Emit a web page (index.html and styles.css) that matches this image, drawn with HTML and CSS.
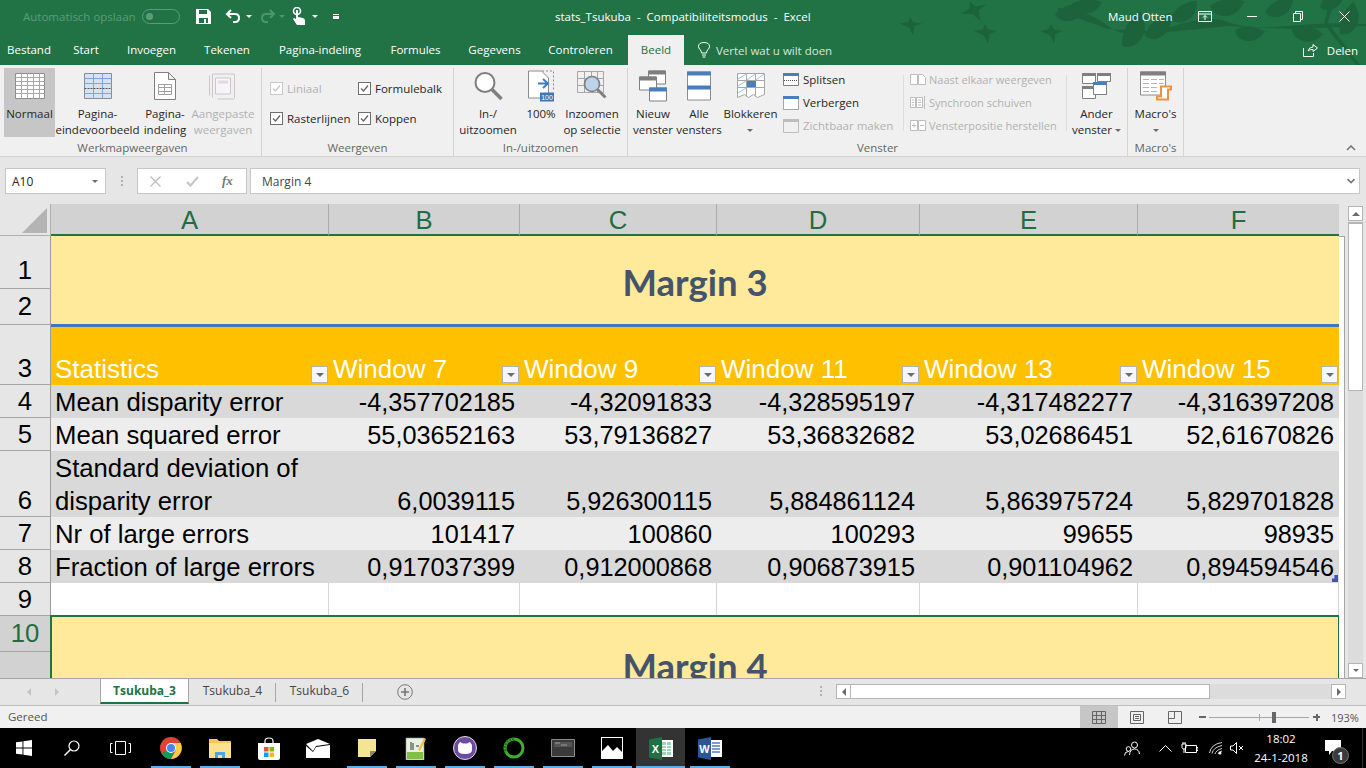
FILE: index.html
```html
<!DOCTYPE html>
<html>
<head>
    <meta charset="UTF-8">
    <title>stats_Tsukuba - Excel</title>
    <link rel="stylesheet" href="styles.css">
</head>
<body>
<div class="window">

    <div class="chrome">
        <svg class="leaves" width="466" height="65" viewBox="0 0 466 65" fill="#1c633c">
            <defs>
                <path id="bird" d="M0 5l6-1 2-4 2 4 7 1-6 2-1 7-3-6z"/>
                <path id="leaf" d="M0 0q8-9 22-7-3 11-12 12-7 1-10-5z"/>
            </defs>
            <use href="#bird" transform="translate(0 17) scale(1.300)"/>
            <use href="#bird" transform="translate(58 6) rotate(-20) scale(1.600)"/>
            <use href="#bird" transform="translate(74 24) scale(1.400)"/>
            <use href="#bird" transform="translate(140 24) scale(1.400)"/>
            <path d="M158 8q30 2 50 18t60 2 60-6 60 4 78-2v2l-78 3-60-3-60 6-60-3-50-18z"/>
            <use href="#leaf" transform="translate(155 14) scale(1.400)"/>
            <use href="#leaf" transform="translate(172 4) rotate(15) scale(1.300)"/>
            <use href="#leaf" transform="translate(222 46) rotate(-45) scale(1.700)"/>
            <use href="#leaf" transform="translate(245 36) rotate(-25) scale(1.500)"/>
            <use href="#leaf" transform="translate(270 18) rotate(-15) scale(1.400)"/>
            <use href="#leaf" transform="translate(310 6) rotate(10) scale(1.500)"/>
            <use href="#leaf" transform="translate(335 30) rotate(20) scale(1.300)"/>
            <use href="#leaf" transform="translate(365 12) rotate(-10) scale(1.400)"/>
            <use href="#leaf" transform="translate(392 27) rotate(30) scale(1.400)"/>
            <use href="#leaf" transform="translate(420 8) rotate(-30) scale(1.500)"/>
            <use href="#leaf" transform="translate(440 34) rotate(-50) scale(1.500)"/>
            <path d="M430 0l-6 24 32 41h4l-32-42 6-23z"/>
        </svg>

        <!-- title bar -->
        <div class="titlebar">
            <span class="autosave">Automatisch opslaan</span>
            <span class="toggle"><i></i></span>
            <svg class="qa-save" width="15" height="15" viewBox="0 0 15 15"><path d="M0 0h12l3 3v12H0z" fill="#fff"/><path d="M3 1h8v4H3zM3 9h9v5H3z" fill="#217346"/><path d="M8 10h2v4H8z" fill="#fff"/></svg>
            <svg class="qa-undo" width="16" height="14" viewBox="0 0 16 14" fill="none" stroke="#fff" stroke-width="2"><path d="M6 1L2 5l4 4M2 5h8q4 0 4 4t-4 4H8"/></svg>
            <i class="caret qa-caret1"></i>
            <svg class="qa-redo" width="16" height="14" viewBox="0 0 16 14" fill="none" stroke="#4f9370" stroke-width="2"><path d="M10 1l4 4-4 4M14 5H6q-4 0-4 4t4 4h2"/></svg>
            <i class="caret caret-dim qa-caret2"></i>
            <svg class="qa-touch" width="14" height="18" viewBox="0 0 14 18"><circle cx="5" cy="4" r="3.500" fill="none" stroke="#fff" stroke-width="1.600"/><path d="M4 3h2v7l5 1q2 .5 2 3v4H5L1 12l1-1 2 1z" fill="#fff"/></svg>
            <i class="caret qa-caret3"></i>
            <span class="qa-more"></span>
            <span class="doc-title">stats_Tsukuba &nbsp;-&nbsp; Compatibiliteitsmodus &nbsp;-&nbsp; Excel</span>
            <span class="user">Maud Otten</span>
            <svg class="btn-display" width="14" height="11" viewBox="0 0 14 11" fill="none" stroke="#fff"><path d="M.5.5h13v10H.5zM.5 3h13M7 9V4.500M5 6.500l2-2 2 2"/></svg>
            <svg class="btn-min" width="11" height="11" viewBox="0 0 11 11" stroke="#fff"><path d="M0 5.500h10"/></svg>
            <svg class="btn-max" width="10" height="11" viewBox="0 0 10 11" fill="none" stroke="#fff"><path d="M.5 2.500h7v8h-7zM2.500 2.500V.5h7v8H7.500"/></svg>
            <svg class="btn-close" width="11" height="11" viewBox="0 0 11 11" stroke="#fff"><path d="M.5.5l10 10M10.500.5l-10 10"/></svg>
        </div>

        <!-- tabs -->
        <div class="tabbar">
            <div class="tabs">
                <span class="tab">Bestand</span>
                <span class="tab">Start</span>
                <span class="tab">Invoegen</span>
                <span class="tab">Tekenen</span>
                <span class="tab">Pagina-indeling</span>
                <span class="tab">Formules</span>
                <span class="tab">Gegevens</span>
                <span class="tab">Controleren</span>
                <span class="tab tab-active">Beeld</span>
            </div>
            <div class="tellme">
                <svg width="12" height="16" viewBox="0 0 12 16" fill="none" stroke="#fff"><path d="M3.500 11q0-2-1.500-3.500Q.5 6 .5 4.500q0-4 5.500-4t5.500 4q0 1.500-1.500 3Q8.500 9 8.500 11zM4 13h4M4.500 15h3"/></svg>
                <span>Vertel wat u wilt doen</span>
            </div>
            <div class="share">
                <svg width="15" height="14" viewBox="0 0 15 14" fill="none" stroke="#fff"><path d="M.5 5v8.500h10V10M5 8q1-4 5-4V1.500L14.500 5 10 8.500V6.500Q7 6 5 8z"/></svg>
                <span>Delen</span>
            </div>
        </div>
    </div>

    <!-- ribbon -->
    <div class="ribbon">
        <div class="group group-views">
            <div class="group-body">
                <div class="rb rb-normal">
                    <svg width="30" height="26" viewBox="0 0 30 26" fill="#fff" stroke="#8c8c8c"><path d="M.5.5h29v25H.5z"/><path fill="none" stroke="#a6a6a6" d="M.5 4.500h29M.5 8.500h29M.5 12.500h29M.5 16.500h29M.5 20.500h29M6.500.5v25M12.500.5v25M18.500.5v25M24.500.5v25"/></svg>
                    <span class="rb-label">Normaal</span>
                </div>
                <div class="rb rb-break">
                    <svg width="28" height="26" viewBox="0 0 28 26" fill="#d3e3f4" stroke="#8c8c8c"><path d="M.5.5h27v25H.5z"/><path fill="none" stroke="#7aa7d6" d="M9.500.5v25M18.500.5v25M.5 5.500h27M.5 10.500h27M.5 20.500h27"/><path fill="none" stroke="#555" stroke-dasharray="2 1" d="M.5 15.500h27"/></svg>
                    <span class="rb-label">Pagina-<br>eindevoorbeeld</span>
                </div>
                <div class="rb rb-layout">
                    <svg width="22" height="28" viewBox="0 0 22 28" fill="#fff" stroke="#7f7f7f"><path d="M.5.5h14l7 7v20H.5zM14.500.5v7h7"/><path fill="none" stroke="#a0a0a0" d="M4.500 12.500h13v10h-13zM4.500 15.500h13M4.500 19.500h13M10.500 12.500v10"/></svg>
                    <span class="rb-label">Pagina-<br>indeling</span>
                </div>
                <div class="rb rb-custom rb-off">
                    <svg width="28" height="27" viewBox="0 0 28 27" fill="none" stroke="#c8c8c8"><path d="M6.500 5.500h15v16h-15z" fill="#f6f4f8"/><path d="M9 8h10v3H9z" fill="#dcdcdc" stroke="none"/><path d="M3.500 1.500h22v24M.5 3v20M3.500 1.500V25"/><path d="M8.500 26.500h17"/></svg>
                    <span class="rb-label">Aangepaste<br>weergaven</span>
                </div>
            </div>
            <div class="group-label">Werkmapweergaven</div>
        </div>

        <div class="group group-show">
            <div class="group-body checks">
                <label class="check check-off"><i class="box"><svg width="11" height="11" viewBox="0 0 11 11" fill="none" stroke="#c8c8c8" stroke-width="1.300"><path d="M2 5.500l2.500 2.500L9 2.500"/></svg></i>Liniaal</label>
                <label class="check"><i class="box"><svg width="11" height="11" viewBox="0 0 11 11" fill="none" stroke="#666" stroke-width="1.300"><path d="M2 5.500l2.500 2.500L9 2.500"/></svg></i>Formulebalk</label>
                <label class="check"><i class="box"><svg width="11" height="11" viewBox="0 0 11 11" fill="none" stroke="#666" stroke-width="1.300"><path d="M2 5.500l2.500 2.500L9 2.500"/></svg></i>Rasterlijnen</label>
                <label class="check"><i class="box"><svg width="11" height="11" viewBox="0 0 11 11" fill="none" stroke="#666" stroke-width="1.300"><path d="M2 5.500l2.500 2.500L9 2.500"/></svg></i>Koppen</label>
            </div>
            <div class="group-label">Weergeven</div>
        </div>

        <div class="group group-zoom">
            <div class="group-body">
                <div class="rb rb-zoom">
                    <svg width="29" height="29" viewBox="0 0 29 29" fill="none" stroke="#7f7f7f"><circle cx="11" cy="11" r="9.500" stroke-width="2" fill="#fff"/><path d="M18 18l9.500 9.500" stroke-width="3.500"/></svg>
                    <span class="rb-label">In-/<br>uitzoomen</span>
                </div>
                <div class="rb rb-100">
                    <svg width="26" height="31" viewBox="0 0 26 31"><path d="M.5.5h13l7 7v20H.5z" fill="#fff" stroke="#8c8c8c"/><path d="M14 .5h11.500v20" fill="none" stroke="#8c8c8c" stroke-dasharray="2 2"/><path d="M10 13h9M15 8.500l5 4.500-5 4.500" fill="none" stroke="#3f7fc0" stroke-width="2"/><path d="M12 22h14v9H12z" fill="#3f78b5"/><text x="19" y="29.500" class="mini-num">100</text></svg>
                    <span class="rb-label">100%</span>
                </div>
                <div class="rb rb-zoomsel">
                    <svg width="30" height="30" viewBox="0 0 30 30" fill="none" stroke="#a6a6a6"><path d="M.5.5h26v21H.5zM.5 7.500h26M.5 14.500h26M7.500.5v21M14.500.5v21M20.500.5v21"/><circle cx="15" cy="13" r="7.500" fill="#bcd3ea" stroke="#7f7f7f" stroke-width="1.600"/><path d="M20.500 18.500l8 8" stroke="#7f7f7f" stroke-width="3"/></svg>
                    <span class="rb-label">Inzoomen<br>op selectie</span>
                </div>
            </div>
            <div class="group-label">In-/uitzoomen</div>
        </div>

        <div class="group group-window">
            <div class="group-body">
                <div class="rb rb-new">
                    <svg width="28" height="31" viewBox="0 0 28 31" fill="#fff" stroke="#7f7f7f"><path d="M9.500.5h17v13h-17z"/><path d="M9.500.5h17v3h-17z" fill="#7f7f7f"/><path d="M.5 6.500h17v13H.5z"/><path d="M.5 6.500h17v3H.5z" fill="#7f7f7f"/><path d="M10.500 17.500h17v13h-17z"/><path d="M10 17h18v4H10z" fill="#4a7ebb" stroke="none"/></svg>
                    <span class="rb-label">Nieuw<br>venster</span>
                </div>
                <div class="rb rb-all">
                    <svg width="24" height="29" viewBox="0 0 24 29" fill="#fff" stroke="#8c8c8c"><path d="M.5.5h23v28H.5z"/><path d="M0 0h24v4H0zM0 14h24v4H0z" fill="#4a7ebb" stroke="none"/></svg>
                    <span class="rb-label">Alle<br>vensters</span>
                </div>
                <div class="rb rb-freeze">
                    <svg width="28" height="26" viewBox="0 0 28 26" fill="#fff" stroke="#a6a6a6"><path d="M.5.5h27v21l-7 3-4-3-5 3-4-3-7 3z"/><path d="M.5 7.500h27M.5 14.500h27M9.500.5v23M18.500.5v23" fill="none"/><path d="M10 8h9v6h-9z" fill="#4a7ebb" stroke="none"/><path d="M1 6l8-5M1 13l8-5M1 20l8-5M10 7l8-6M19 7l8-6" fill="none" stroke="#9dc0e4"/></svg>
                    <span class="rb-label">Blokkeren<br><i class="caret caret-gray"></i></span>
                </div>
                <div class="small-list list-split">
                    <div class="small-row">
                        <svg width="16" height="13" viewBox="0 0 16 13" fill="#fff" stroke="#7f7f7f"><path d="M.5.5h15v12H.5z"/><path d="M0 0h16v3H0z" fill="#4a7ebb" stroke="none"/><path d="M1 7.500h14" stroke="#555" stroke-dasharray="1 1"/></svg>
                        <span>Splitsen</span>
                    </div>
                    <div class="small-row">
                        <svg width="16" height="14" viewBox="0 0 16 14" fill="#fff" stroke="#555"><path d="M.5.500h15v13H.5z" stroke-dasharray="1 1"/><path d="M0 0h16v3H0z" fill="#4a7ebb" stroke="none"/></svg>
                        <span>Verbergen</span>
                    </div>
                    <div class="small-row row-off">
                        <svg width="16" height="14" viewBox="0 0 16 14" fill="none" stroke="#bdbdbd"><path d="M.5.500h15v13H.5z"/><path d="M0 0h16v3H0z" fill="#bdbdbd" stroke="none"/></svg>
                        <span>Zichtbaar maken</span>
                    </div>
                </div>
                <div class="small-list list-sync">
                    <div class="small-row row-off">
                        <svg width="16" height="11" viewBox="0 0 16 11" fill="#fff" stroke="#bdbdbd"><path d="M.5.500h7v10h-7zM8.500.500h4l3 3v7h-7z"/></svg>
                        <span>Naast elkaar weergeven</span>
                    </div>
                    <div class="small-row row-off">
                        <svg width="16" height="13" viewBox="0 0 16 13" fill="#fff" stroke="#bdbdbd"><path d="M.5 1.500h5v10h-5zM6.500 1.500h6v10h-6zM2 4h2M2 6.500h2M2 9h2M8 4h3M8 6.500h3M8 9h3M14.500 0v13"/></svg>
                        <span>Synchroon schuiven</span>
                    </div>
                    <div class="small-row row-off">
                        <svg width="16" height="11" viewBox="0 0 16 11" fill="#fff" stroke="#bdbdbd"><path d="M.5.500h7v10h-7zM8.500.500h7v10h-7zM2 5.500h4M4 3.500v4M10 5.500h4"/></svg>
                        <span>Vensterpositie herstellen</span>
                    </div>
                </div>
                <div class="rb rb-switch">
                    <svg width="30" height="26" viewBox="0 0 30 26" fill="#fff" stroke="#7f7f7f"><path d="M.5.5h13v10H.5zM15.500.5h13v8h-13zM.5 13.500h13v12H.5z"/><path d="M0 0h14v3H0zM15 0h14v3H15zM0 13h14v3H0z" fill="#7f7f7f" stroke="none"/><path d="M11.500 9.500h13v12h-13z"/><path d="M11 9h14v3H11z" fill="#4a7ebb" stroke="none"/></svg>
                    <span class="rb-label">Ander<br>venster <i class="caret caret-gray"></i></span>
                </div>
            </div>
            <div class="group-label">Venster</div>
        </div>

        <div class="group group-macro">
            <div class="group-body">
                <div class="rb rb-macro">
                    <svg width="32" height="29" viewBox="0 0 32 29" fill="#fff" stroke="#8c8c8c"><path d="M.5.5h25v23H.5z"/><path d="M0 0h26v4H0z" fill="#7f7f7f" stroke="none"/><path d="M3 8h6M11 8h6M19 8h5M3 12h6M11 12h6M19 12h5M3 16h6M11 16h6M3 20h6M11 20h6" fill="none" stroke="#b5b5b5"/><path d="M21 15h10v3h-3v10h-11v-3h4z" fill="#fff" stroke="#ed9144" stroke-width="2"/></svg>
                    <span class="rb-label">Macro's<br><i class="caret caret-gray"></i></span>
                </div>
            </div>
            <div class="group-label">Macro's</div>
        </div>

        <svg class="collapse" width="10" height="6" viewBox="0 0 10 6" fill="none" stroke="#777" stroke-width="1.600"><path d="M1 5l4-4 4 4"/></svg>
    </div>

    <!-- formula bar -->
    <div class="formulabar">
        <div class="namebox"><span>A10</span><i class="caret caret-gray"></i></div>
        <div class="fdots"></div>
        <div class="fbuttons">
            <svg width="11" height="11" viewBox="0 0 11 11" stroke="#bdbdbd" stroke-width="1.300"><path d="M.5.5l10 10M10.500.5l-10 10"/></svg>
            <svg width="13" height="11" viewBox="0 0 13 11" fill="none" stroke="#c4c4c4" stroke-width="2"><path d="M1 6l3.500 3.500L12 1"/></svg>
            <span class="fx">fx</span>
        </div>
        <div class="finput"><span>Margin 4</span><svg width="8" height="6" viewBox="0 0 8 6" fill="none" stroke="#777" stroke-width="1.600"><path d="M.5 1l3.500 3.500L7.500 1"/></svg></div>
    </div>

    <!-- sheet -->
    <div class="sheet-area">
        <div class="sheet">
            <div class="corner"><i></i></div>
            <div class="ch">A</div><div class="ch">B</div><div class="ch">C</div><div class="ch">D</div><div class="ch">E</div><div class="ch ch-last">F</div>

            <div class="rh rh-high">1</div>
            <div class="merged m3">Margin 3</div>
            <div class="rh rh-high">2</div>

            <div class="rh">3</div>
            <div class="cell head">Statistics<i class="filter"></i></div>
            <div class="cell head">Window 7<i class="filter"></i></div>
            <div class="cell head">Window 9<i class="filter"></i></div>
            <div class="cell head">Window 11<i class="filter"></i></div>
            <div class="cell head">Window 13<i class="filter"></i></div>
            <div class="cell head">Window 15<i class="filter"></i></div>

            <div class="rh">4</div>
            <div class="cell dark">Mean disparity error</div>
            <div class="cell dark num">-4,357702185</div>
            <div class="cell dark num">-4,32091833</div>
            <div class="cell dark num">-4,328595197</div>
            <div class="cell dark num">-4,317482277</div>
            <div class="cell dark num">-4,316397208</div>

            <div class="rh">5</div>
            <div class="cell light">Mean squared error</div>
            <div class="cell light num">55,03652163</div>
            <div class="cell light num">53,79136827</div>
            <div class="cell light num">53,36832682</div>
            <div class="cell light num">53,02686451</div>
            <div class="cell light num">52,61670826</div>

            <div class="rh">6</div>
            <div class="cell dark wrapped">Standard deviation of disparity error</div>
            <div class="cell dark num">6,0039115</div>
            <div class="cell dark num">5,926300115</div>
            <div class="cell dark num">5,884861124</div>
            <div class="cell dark num">5,863975724</div>
            <div class="cell dark num">5,829701828</div>

            <div class="rh">7</div>
            <div class="cell light">Nr of large errors</div>
            <div class="cell light num">101417</div>
            <div class="cell light num">100860</div>
            <div class="cell light num">100293</div>
            <div class="cell light num">99655</div>
            <div class="cell light num">98935</div>

            <div class="rh">8</div>
            <div class="cell dark">Fraction of large errors</div>
            <div class="cell dark num">0,917037399</div>
            <div class="cell dark num">0,912000868</div>
            <div class="cell dark num">0,906873915</div>
            <div class="cell dark num">0,901104962</div>
            <div class="cell dark num corner-mark">0,894594546</div>

            <div class="rh">9</div>
            <div class="cell blank"></div><div class="cell blank"></div><div class="cell blank"></div><div class="cell blank"></div><div class="cell blank"></div><div class="cell blank"></div>

            <div class="rh rh-high rh-sel">10</div>
            <div class="merged m4">Margin 4</div>
            <div class="rh rh-sel"></div>
        </div>
        <div class="gutter"></div>
        <div class="vscroll">
            <div class="sb-btn"><i class="arrow-up"></i></div>
            <div class="sb-thumb"></div>
            <div class="sb-track"></div>
            <div class="sb-btn"><i class="caret caret-gray"></i></div>
        </div>
    </div>

    <!-- sheet tabs -->
    <div class="sheetbar">
        <i class="nav nav-left"></i>
        <i class="nav nav-right"></i>
        <div class="stab stab-active">Tsukuba_3</div>
        <div class="stab stab-sep">Tsukuba_4</div>
        <div class="stab stab-sep">Tsukuba_6</div>
        <svg class="addsheet" width="16" height="16" viewBox="0 0 16 16" fill="none" stroke="#777"><circle cx="8" cy="8" r="7.300"/><path d="M4 8h8M8 4v8" stroke-width="1.600"/></svg>
        <div class="hdots"></div>
        <div class="hscroll">
            <div class="hb"><i class="tri-left"></i></div>
            <div class="hthumb"></div>
            <div class="htrack"></div>
            <div class="hb"><i class="tri-right"></i></div>
        </div>
    </div>

    <!-- status bar -->
    <div class="statusbar">
        <span class="ready">Gereed</span>
        <div class="viewbtns">
            <div class="vb vb-on"><svg width="14" height="13" viewBox="0 0 14 13" fill="none" stroke="#666"><path d="M.5.5h13v12H.5zM.5 4.500h13M.5 8.500h13M4.500.5v12M9.500.5v12"/></svg></div>
            <div class="vb"><svg width="14" height="13" viewBox="0 0 14 13" fill="none" stroke="#666"><path d="M.5.5h13v12H.5zM3.500 3.500h7v6h-7zM5 5.500h4M5 7.500h4"/></svg></div>
            <div class="vb"><svg width="14" height="13" viewBox="0 0 14 13" fill="none" stroke="#666"><path d="M.5.5h13v12H.5zM.5 7.500h6V.5"/></svg></div>
        </div>
        <div class="zoomctl">
            <i class="z-minus"></i>
            <div class="z-track"><i class="z-mid"></i><i class="z-thumb"></i></div>
            <i class="z-plus"></i>
        </div>
        <span class="zoompct">193%</span>
    </div>

    <!-- taskbar -->
    <div class="taskbar">
        <div class="task task-plain">
            <svg width="16" height="16" viewBox="0 0 16 16" fill="#fff"><path d="M0 2.300l6.500-.9v6.200H0zM7.400 1.300L16 0v7.600H7.400zM0 8.400h6.500v6.200L0 13.700zM7.400 8.400H16V16l-8.600-1.300z"/></svg>
        </div>
        <div class="task task-plain">
            <svg width="16" height="16" viewBox="0 0 16 16" fill="none" stroke="#fff" stroke-width="1.200"><circle cx="10" cy="6" r="5"/><path d="M6.500 9.500L.5 15.500" stroke-width="1.500"/></svg>
        </div>
        <div class="task task-plain task-view">
            <svg width="21" height="14" viewBox="0 0 21 14" fill="none" stroke="#fff"><path d="M5.500.5h10v13h-10zM2.500 2.500H.5v9h2M18.500 2.500h2v9h-2"/></svg>
        </div>
        <div class="task run">
            <svg width="22" height="22" viewBox="0 0 22 22"><circle cx="11" cy="11" r="11" fill="#db4437"/><path d="M11 11L1.500 16.500A11 11 0 0 0 11 22l5-11z" fill="#0f9d58"/><path d="M11 6h9.500A11 11 0 0 1 11 22l5-9z" fill="#ffcd40"/><circle cx="11" cy="11" r="5" fill="#fff"/><circle cx="11" cy="11" r="4" fill="#4285f4"/></svg>
        </div>
        <div class="task run">
            <svg width="22" height="20" viewBox="0 0 22 20"><path d="M0 1h8l2 2h12v17H0z" fill="#f2c65b"/><path d="M0 5h22v15H0z" fill="#fbe08f"/><path d="M6 14h10v6H6z" fill="#4aa5de"/><path d="M9 17h4v3H9z" fill="#fbe08f"/></svg>
        </div>
        <div class="task">
            <svg width="24" height="23" viewBox="0 0 24 23"><path d="M1 6h22v15q0 2-2 2H3q-2 0-2-2z" fill="#fff"/><path d="M8 8V4q0-3 4-3t4 3v4" fill="none" stroke="#fff" stroke-width="1.200"/><path d="M7 10h4.500v4.500H7z" fill="#f25022"/><path d="M12.500 10H17v4.500h-4.500z" fill="#7fba00"/><path d="M7 15.500h4.500V20H7z" fill="#00a4ef"/><path d="M12.500 15.500H17V20h-4.500z" fill="#ffb900"/></svg>
        </div>
        <div class="task">
            <svg width="24" height="19" viewBox="0 0 24 19"><path d="M0 5L12 0l12 5-14 2-3 5z" fill="#fff"/><path d="M0 7l7 6 3-5 14-2v13H0z" fill="#fff"/></svg>
        </div>
        <div class="task run">
            <svg width="18" height="18" viewBox="0 0 18 18"><path d="M0 0h18v12l-6 6H0z" fill="#f3e594"/><path d="M18 12h-6v6z" fill="#8c8a6a"/></svg>
        </div>
        <div class="task run">
            <svg width="21" height="24" viewBox="0 0 21 24"><path d="M1 2h18v22H1z" fill="#e8f0e0" stroke="#999" stroke-width=".6"/><path d="M2 16h16v7H2z" fill="#7fc241"/><path d="M6 6v8M8 7v7M11 10h3" stroke="#333" fill="none"/><path d="M13 14l6-12 2 1-6 12z" fill="#f0c040"/></svg>
        </div>
        <div class="task run">
            <svg width="24" height="24" viewBox="0 0 24 24"><circle cx="12" cy="12" r="11.500" fill="#6f4aa5" stroke="#ddd"/><path d="M5 9l2-3 3 1.500h4L17 6l2 3v5q0 4-7 4t-7-4z" fill="#fff"/></svg>
        </div>
        <div class="task run">
            <svg width="22" height="22" viewBox="0 0 22 22" fill="none" stroke="#3db02c" stroke-width="3"><circle cx="11" cy="11" r="9"/><path d="M11 2A9 9 0 0 0 3 15" stroke="#1e7d1a" stroke-dasharray="2 1"/></svg>
        </div>
        <div class="task run">
            <svg width="24" height="18" viewBox="0 0 24 18"><path d="M.5.5h23v17H.5z" fill="#3a3a3a" stroke="#8c8c8c"/><path d="M3 3h18v5H3z" fill="#555"/><path d="M4 4h5M10 6h6" stroke="#999"/></svg>
        </div>
        <div class="task run">
            <svg width="22" height="22" viewBox="0 0 22 22"><path d="M0 0h22v22H0z" fill="#fff"/><path d="M1 1h20v20H1z" fill="#000"/><path d="M1 14l6-6 5 6 4-4 5 5v6H1z" fill="#fff"/></svg>
        </div>
        <div class="task run task-active">
            <svg width="24" height="23" viewBox="0 0 24 23"><path d="M10 3h14v17H10z" fill="#fff"/><path d="M13 5h9v13h-9z" fill="#9fd3b5"/><path d="M12.500 8.500h10M12.500 11.500h10M12.500 14.500h10M17.500 5v13" stroke="#fff"/><path d="M0 2.500L13 0v23L0 20.500z" fill="#1d7145"/><text x="6.500" y="15.500" class="app-letter">X</text></svg>
        </div>
        <div class="task run">
            <svg width="24" height="23" viewBox="0 0 24 23"><path d="M10 3h14v17H10z" fill="#fff"/><path d="M14 6h8M14 9h8M14 12h8M14 15h8" stroke="#4f7fc0" stroke-width="1.300"/><path d="M0 2.500L13 0v23L0 20.500z" fill="#2b579a"/><text x="6.500" y="15.500" class="app-letter">W</text></svg>
        </div>
        <div class="tray">
            <svg width="16" height="15" viewBox="0 0 16 15" fill="none" stroke="#fff"><circle cx="10.500" cy="4" r="3"/><path d="M5.500 14q.5-6 5-6t5 5"/><circle cx="4.500" cy="8" r="2.300"/><path d="M.5 14.500q0-4 4-4"/></svg>
            <svg class="tray-up" width="13" height="7" viewBox="0 0 13 7" fill="none" stroke="#fff"><path d="M.5 6.500l6-6 6 6"/></svg>
            <svg class="tray-batt" width="17" height="12" viewBox="0 0 17 12" fill="none" stroke="#fff"><path d="M4.500 3.500h11v7h-11z"/><path d="M15.500 5.500h1.500v3h-1.500M1 2h4v3.500Q5 7 3 7T1 5.500zM2 0v2M4 0v2M3 7v4"/></svg>
            <svg class="tray-wifi" width="14" height="13" viewBox="0 0 14 13" fill="none" stroke="#cfcfcf"><path d="M.5 11Q2 2 13 .5M3 11.500q1-6 10-8M6 12q1-4 7-5.500M9 12q.5-2 4-3"/><circle cx="11" cy="11" r="1.500" fill="#fff" stroke="none"/></svg>
            <svg class="tray-sound" width="14" height="12" viewBox="0 0 14 12" fill="none" stroke="#fff"><path d="M.5 4h2.500L6.500.5v11L3 8H.5zM9 4l4 4M13 4l-4 4"/></svg>
            <div class="clock"><span>18:02</span><span>24-1-2018</span></div>
            <div class="notify">
                <svg width="16" height="15" viewBox="0 0 16 15"><path d="M0 0h16v11H7l-3 4v-4H0z" fill="#fff"/></svg>
                <span class="badge">1</span>
            </div>
        </div>
    </div>
</div>
</body>
</html>
```

FILE: styles.css
```css
* {
    margin: 0;
    padding: 0;
    box-sizing: border-box;
}

html, body {
    width: 100%;
    height: 100%;
    overflow: hidden;
}

body {
    font-family: "Open Sans", "Liberation Sans", sans-serif;
    font-size: 11.5px;
    color: #262626;
}

i {
    font-style: normal;
}

svg {
    display: block;
    flex: none;
}

.window {
    width: 1366px;
    height: 768px;
    display: flex;
    flex-direction: column;
    background: #e6e6e6;
}

.caret {
    display: inline-block;
    width: 0;
    height: 0;
    border-left: 3px solid transparent;
    border-right: 3px solid transparent;
    border-top: 3px solid #fff;
    vertical-align: middle;
}

.caret-dim {
    border-top-color: #4f9370;
}

.caret-gray {
    border-top-color: #6b6b6b;
}

/* title bar and tabs share the green background with the leaves */
.chrome {
    height: 65px;
    background: #217346;
    color: #fff;
    position: relative;
}

.leaves {
    position: absolute;
    left: 900px;
    top: 0;
}

.titlebar {
    height: 38px;
    padding-bottom: 6px;
    display: flex;
    align-items: center;
    position: relative;
}

.autosave {
    margin-left: 23px;
    width: 119px;
    color: #5a9c7a;
    white-space: nowrap;
}

.toggle {
    width: 38px;
    height: 15px;
    border: 1px solid #5a9c7a;
    border-radius: 8px;
    padding: 3px;
}

.toggle i {
    display: block;
    width: 7px;
    height: 7px;
    background: #5a9c7a;
    border-radius: 50%;
}

.qa-save {
    margin-left: 16px;
}

.qa-undo {
    margin-left: 14px;
}

.qa-caret1 {
    margin-left: 5px;
}

.qa-redo {
    margin-left: 8px;
}

.qa-caret2 {
    margin-left: 3px;
}

.qa-touch {
    margin-left: 7px;
}

.qa-caret3 {
    margin-left: 6px;
}

.qa-more {
    width: 6px;
    height: 5px;
    margin-left: 15px;
    border-top: 1px solid #fff;
    border-bottom: 3px solid #fff;
}

.doc-title {
    margin-left: 216px;
    width: 553px;
    white-space: nowrap;
}

.user {
    width: 90px;
}

.btn-min {
    margin-left: 35px;
}

.btn-max {
    margin-left: 35px;
}

.btn-close {
    margin-left: 36px;
}

.tabbar {
    height: 27px;
    display: flex;
    position: relative;
}

.tabs {
    display: grid;
    grid-template-columns: 58px 56px 75px 76px 110px 81px 77px 95px 56px;
}

.tab {
    height: 27px;
    line-height: 24px;
    text-align: center;
    white-space: nowrap;
}

.tab-active {
    background: #f0f0f0;
    color: #217346;
    height: 30px;
    margin-top: -3px;
    line-height: 30px;
}

.tellme {
    margin-left: 14px;
    display: flex;
    align-items: center;
    gap: 6px;
    color: #d5e6dc;
    padding-bottom: 3px;
}

.share {
    margin-left: auto;
    margin-right: 8px;
    display: flex;
    align-items: center;
    gap: 9px;
    padding-bottom: 3px;
}

/* ribbon */
.ribbon {
    height: 92px;
    background: #f0f0f0;
    border-bottom: 1px solid #d2d2d2;
    display: flex;
    position: relative;
}

.group {
    height: 88px;
    margin-top: 3px;
    border-right: 1px solid #d4d4d4;
    display: flex;
    flex-direction: column;
}

.group-views {
    width: 262px;
    padding-left: 4px;
}

.group-show {
    width: 192px;
}

.group-zoom {
    width: 174px;
}

.group-window {
    width: 500px;
}

.group-macro {
    width: 56px;
}

.group-body {
    display: flex;
    height: 73px;
}

.group-label {
    text-align: center;
    color: #666;
    line-height: 14px;
    white-space: nowrap;
}

.rb {
    display: flex;
    flex-direction: column;
    align-items: center;
    padding-top: 2px;
    height: 69px;
    white-space: nowrap;
}

.rb svg {
    height: 32px;
    margin-bottom: 4px;
}

.rb-label {
    text-align: center;
    line-height: 16px;
}

.rb-off {
    color: #b1b1b1;
}

.rb-normal {
    width: 51px;
    background: #c6c6c6;
}

.rb-break {
    width: 85px;
}

.rb-layout {
    width: 50px;
}

.rb-custom {
    width: 66px;
}

.checks {
    display: grid;
    grid-template-columns: 88px 95px;
    grid-template-rows: 30px 30px;
    padding: 5px 0 0 8px;
    align-content: start;
}

.check {
    display: flex;
    align-items: center;
    gap: 4px;
    white-space: nowrap;
}

.check-off {
    color: #b1b1b1;
}

.box {
    width: 13px;
    height: 13px;
    background: #fff;
    border: 1px solid #6e6e6e;
    display: block;
}

.check-off .box {
    border-color: #c8c8c8;
}

.rb-zoom {
    width: 68px;
}

.rb-100 {
    width: 38px;
}

.rb-zoomsel {
    width: 64px;
}

.rb-new {
    width: 50px;
}

.rb-all {
    width: 42px;
}

.rb-freeze {
    width: 61px;
}

.small-list {
    display: flex;
    flex-direction: column;
}

.list-split {
    width: 120px;
    margin-left: 2px;
}

.list-sync {
    width: 164px;
    height: 56px;
    margin-top: 7px;
    padding-left: 6px;
    border-left: 1px solid #dedede;
    border-right: 1px solid #dedede;
    font-size: 11px;
}

.list-sync .small-row:first-child {
    margin-top: -7px;
}

.small-row {
    height: 23px;
    flex: none;
    display: flex;
    align-items: center;
    gap: 4px;
    white-space: nowrap;
}

.list-sync .small-row {
    gap: 3px;
}

.row-off {
    color: #b1b1b1;
}

.rb-switch {
    width: 59px;
}

.rb-macro {
    width: 55px;
}

.mini-num {
    font-family: "Liberation Sans", sans-serif;
    font-size: 7px;
    fill: #fff;
    text-anchor: middle;
}

.collapse {
    position: absolute;
    right: 10px;
    top: 80px;
}

/* formula bar */
.formulabar {
    height: 47px;
    padding: 11px 6px 0 5px;
    display: flex;
    align-items: flex-start;
}

.namebox {
    width: 101px;
    height: 26px;
    background: #fff;
    border: 1px solid #c6c6c6;
    display: flex;
    align-items: center;
    justify-content: space-between;
    padding: 0 7px 0 6px;
    font-size: 12px;
}

.fdots {
    width: 2px;
    height: 10px;
    margin: 8px 14px 0 15px;
    background: repeating-linear-gradient(#b0b0b0 0 2px, transparent 2px 4px);
}

.fbuttons {
    width: 110px;
    height: 26px;
    background: #fff;
    border: 1px solid #c6c6c6;
    display: flex;
    align-items: center;
    padding-left: 12px;
    gap: 25px;
}

.fx {
    font-family: "Liberation Serif", serif;
    font-style: italic;
    font-weight: bold;
    font-size: 13px;
    color: #777;
    margin-left: -2px;
}

.finput {
    margin-left: 3px;
    width: 1110px;
    height: 26px;
    background: #fff;
    border: 1px solid #c6c6c6;
    display: flex;
    align-items: center;
    justify-content: space-between;
    padding: 0 4px 0 11px;
    font-size: 12px;
    color: #444;
}

/* sheet */
.sheet-area {
    height: 475px;
    display: flex;
    border-bottom: 1px solid #a6a6a6;
}

.sheet {
    width: 1339px;
    height: 474px;
    display: grid;
    grid-template-columns: 51px 278px 191px 197px 203px 218px 201px;
    grid-template-rows: 32px 53px 36px 60px 33px 33px 66px 33px 33px 33px 36px 64px;
    overflow: hidden;
    font-family: "Liberation Sans", Arial, sans-serif;
    font-size: 25.7px;
    color: #000;
    background: #fff;
}

.corner {
    background: #e6e6e6;
    border-bottom: 1px solid #b0b0b0;
    border-right: 1px solid #b0b0b0;
    padding: 4px 0 0 22px;
}

.corner i {
    display: block;
    width: 25px;
    height: 25px;
    background: #b4b4b4;
    clip-path: polygon(100% 0, 100% 100%, 0 100%);
}

.ch {
    background: #d2d2d2;
    color: #1f6e43;
    border-right: 1px solid #ababab;
    border-bottom: 2px solid #217346;
    text-align: center;
    line-height: 33px;
}

.ch-last {
    border-right: 0;
}

.rh {
    grid-column: 1;
    background: #e6e6e6;
    border-right: 1px solid #9b9b9b;
    border-bottom: 1px solid #a6a6a6;
    line-height: 31px;
    display: flex;
    align-items: flex-end;
    justify-content: center;
}

.rh-high {
    line-height: 36px;
}

.rh-sel {
    background: #d2d2d2;
    color: #1f6e43;
    border-right-color: #217346;
}

.merged {
    grid-column: 2 / 8;
    grid-row: span 2;
    background: #ffe99b;
    display: flex;
    align-items: center;
    justify-content: center;
    font-family: Lato, "Liberation Sans", sans-serif;
    font-weight: bold;
    font-size: 36.500px;
    color: #44546a;
    position: relative;
    z-index: 1;
}

.m3 {
    padding-top: 3px;
}

.m3::after {
    content: "";
    position: absolute;
    left: 0;
    right: 0;
    bottom: -2px;
    height: 3px;
    background: #4472c4;
}

.m4 {
    outline: 2px solid #217346;
    outline-offset: -1px;
}

.cell {
    line-height: 31px;
    padding: 0 5px 0 4px;
    display: flex;
    align-items: flex-end;
    position: relative;
    min-width: 0;
}

.num {
    justify-content: flex-end;
    font-size: 25.300px;
}

.wrapped {
    line-height: 33px;
    align-items: flex-start;
    padding-top: 1px;
}

.head {
    background: #ffc000;
    color: #fff;
    font-size: 26px;
}

.filter {
    position: absolute;
    right: 1px;
    bottom: 2px;
    width: 17px;
    height: 17px;
    background: #f3f6fd;
    border: 1px solid #b3b3b3;
}

.filter::after {
    content: "";
    position: absolute;
    left: 4px;
    top: 6px;
    border-left: 4px solid transparent;
    border-right: 4px solid transparent;
    border-top: 4px solid #6b6b6b;
}

.dark {
    background: #d9d9d9;
}

.light {
    background: #ededed;
}

.blank {
    border-right: 1px solid #d4d4d4;
}

.corner-mark::after {
    content: "";
    position: absolute;
    right: 1px;
    bottom: 1px;
    width: 6px;
    height: 7px;
    background: #4355b0;
    clip-path: polygon(100% 0, 100% 100%, 0 100%, 0 50%, 40% 50%, 40% 0);
}

.gutter {
    width: 6px;
    margin-top: 32px;
    background: #fff;
    border-right: 1px solid #a6a6a6;
    border-top: 1px solid #a6a6a6;
}

.vscroll {
    width: 21px;
    padding: 2px 3px 0 3px;
    display: flex;
    flex-direction: column;
}

.sb-btn {
    height: 15px;
    background: #fff;
    border: 1px solid #b5b5b5;
    display: flex;
    align-items: center;
    justify-content: center;
    flex: none;
}

.arrow-up {
    border-left: 4px solid transparent;
    border-right: 4px solid transparent;
    border-bottom: 4px solid #6b6b6b;
}

.sb-thumb {
    height: 169px;
    margin-top: 1px;
    background: #fff;
    border: 1px solid #b5b5b5;
    border-top-width: 2px;
    flex: none;
}

.sb-track {
    flex: 1;
    background: #dcdcdc;
}

/* sheet tabs */
.sheetbar {
    height: 27px;
    background: #e6e6e6;
    border-bottom: 1px solid #bdbdbd;
    display: flex;
}

.nav {
    margin-top: 9px;
    width: 0;
    height: 0;
    border-top: 4px solid transparent;
    border-bottom: 4px solid transparent;
}

.nav-left {
    margin-left: 27px;
    border-right: 4px solid #c4c4c4;
}

.nav-right {
    margin-left: 24px;
    border-left: 4px solid #c4c4c4;
}

.stab {
    height: 25px;
    line-height: 24px;
    text-align: center;
    white-space: nowrap;
    font-size: 12px;
    color: #444;
}

.stab-active {
    margin-left: 41px;
    width: 89px;
    background: #fff;
    color: #217346;
    font-weight: bold;
    border-left: 1px solid #a6a6a6;
    border-right: 1px solid #a6a6a6;
    border-bottom: 2px solid #217346;
}

.stab-sep {
    width: 87px;
    position: relative;
}

.stab-sep::after {
    content: "";
    position: absolute;
    right: 0;
    top: 4px;
    height: 19px;
    border-right: 1px solid #a6a6a6;
}

.addsheet {
    margin: 5px 0 0 34px;
}

.hdots {
    width: 2px;
    height: 10px;
    margin: 7px 0 0 407px;
    background: repeating-linear-gradient(#b0b0b0 0 2px, transparent 2px 4px);
}

.hscroll {
    margin: 5px 0 0 14px;
    width: 510px;
    height: 15px;
    display: flex;
}

.hb {
    width: 15px;
    height: 15px;
    background: #fff;
    border: 1px solid #b5b5b5;
    display: flex;
    align-items: center;
    justify-content: center;
    flex: none;
}

.tri-left {
    border-top: 4px solid transparent;
    border-bottom: 4px solid transparent;
    border-right: 4px solid #6b6b6b;
}

.tri-right {
    border-top: 4px solid transparent;
    border-bottom: 4px solid transparent;
    border-left: 4px solid #6b6b6b;
}

.hthumb {
    width: 359px;
    background: #fff;
    border: 1px solid #b5b5b5;
    border-left-width: 0;
    flex: none;
}

.htrack {
    flex: 1;
    background: #dcdcdc;
}

/* status bar */
.statusbar {
    height: 22px;
    background: #f0f0f0;
    display: flex;
    align-items: center;
    color: #555;
}

.ready {
    margin: -2px 0 0 8px;
    width: 1072px;
}

.viewbtns {
    display: flex;
    height: 22px;
}

.vb {
    width: 38px;
    height: 22px;
    display: flex;
    align-items: center;
    justify-content: center;
}

.vb-on {
    background: #c6c6c6;
}

.zoomctl {
    display: flex;
    align-items: center;
    margin-left: 5px;
}

.z-minus {
    width: 7px;
    height: 2px;
    background: #666;
}

.z-track {
    width: 100px;
    height: 1px;
    margin: 0 4px 0 3px;
    background: #a6a6a6;
    position: relative;
}

.z-mid {
    position: absolute;
    left: 50px;
    top: -3px;
    width: 1px;
    height: 7px;
    background: #a6a6a6;
}

.z-thumb {
    position: absolute;
    left: 63px;
    top: -5px;
    width: 4px;
    height: 11px;
    background: #666;
}

.z-plus {
    width: 7px;
    height: 7px;
    background: linear-gradient(#666, #666) center / 7px 2px no-repeat, linear-gradient(#666, #666) center / 2px 7px no-repeat;
}

.zoompct {
    margin-left: 11px;
    font-size: 11px;
}

/* taskbar */
.taskbar {
    height: 40px;
    background: #000;
    display: flex;
}

.task {
    width: 49px;
    height: 40px;
    display: flex;
    align-items: center;
    justify-content: center;
    position: relative;
    color: #fff;
}

.task-plain {
    width: 48px;
}

.task-view {
    margin-right: 2px;
}

.run::after {
    content: "";
    position: absolute;
    left: 5px;
    right: 4px;
    bottom: 0;
    height: 2px;
    background: #63acdf;
}

.task-active {
    background: #333;
}

.task-active::after {
    left: 0;
    right: 0;
}

.app-letter {
    font-family: "Liberation Sans", sans-serif;
    font-size: 11px;
    font-weight: bold;
    fill: #fff;
    text-anchor: middle;
}

.tray {
    margin-left: auto;
    margin-right: 3px;
    height: 40px;
    display: flex;
    align-items: center;
    color: #fff;
    border-right: 1px solid #333;
}

.tray-up {
    margin-left: 19px;
}

.tray-batt {
    margin-left: 9px;
}

.tray-wifi {
    margin-left: 11px;
}

.tray-sound {
    margin-left: 7px;
}

.clock {
    width: 64px;
    margin-left: 5px;
    display: flex;
    flex-direction: column;
    align-items: center;
    line-height: 19px;
    font-size: 11.500px;
}

.notify {
    width: 49px;
    height: 40px;
    position: relative;
    padding: 12px 0 0 12px;
}

.badge {
    position: absolute;
    left: 19px;
    top: 19px;
    width: 17px;
    height: 17px;
    border-radius: 50%;
    background: #3a3a3a;
    border: 1px solid #777;
    font-size: 11px;
    font-weight: bold;
    line-height: 15px;
    text-align: center;
}
```
